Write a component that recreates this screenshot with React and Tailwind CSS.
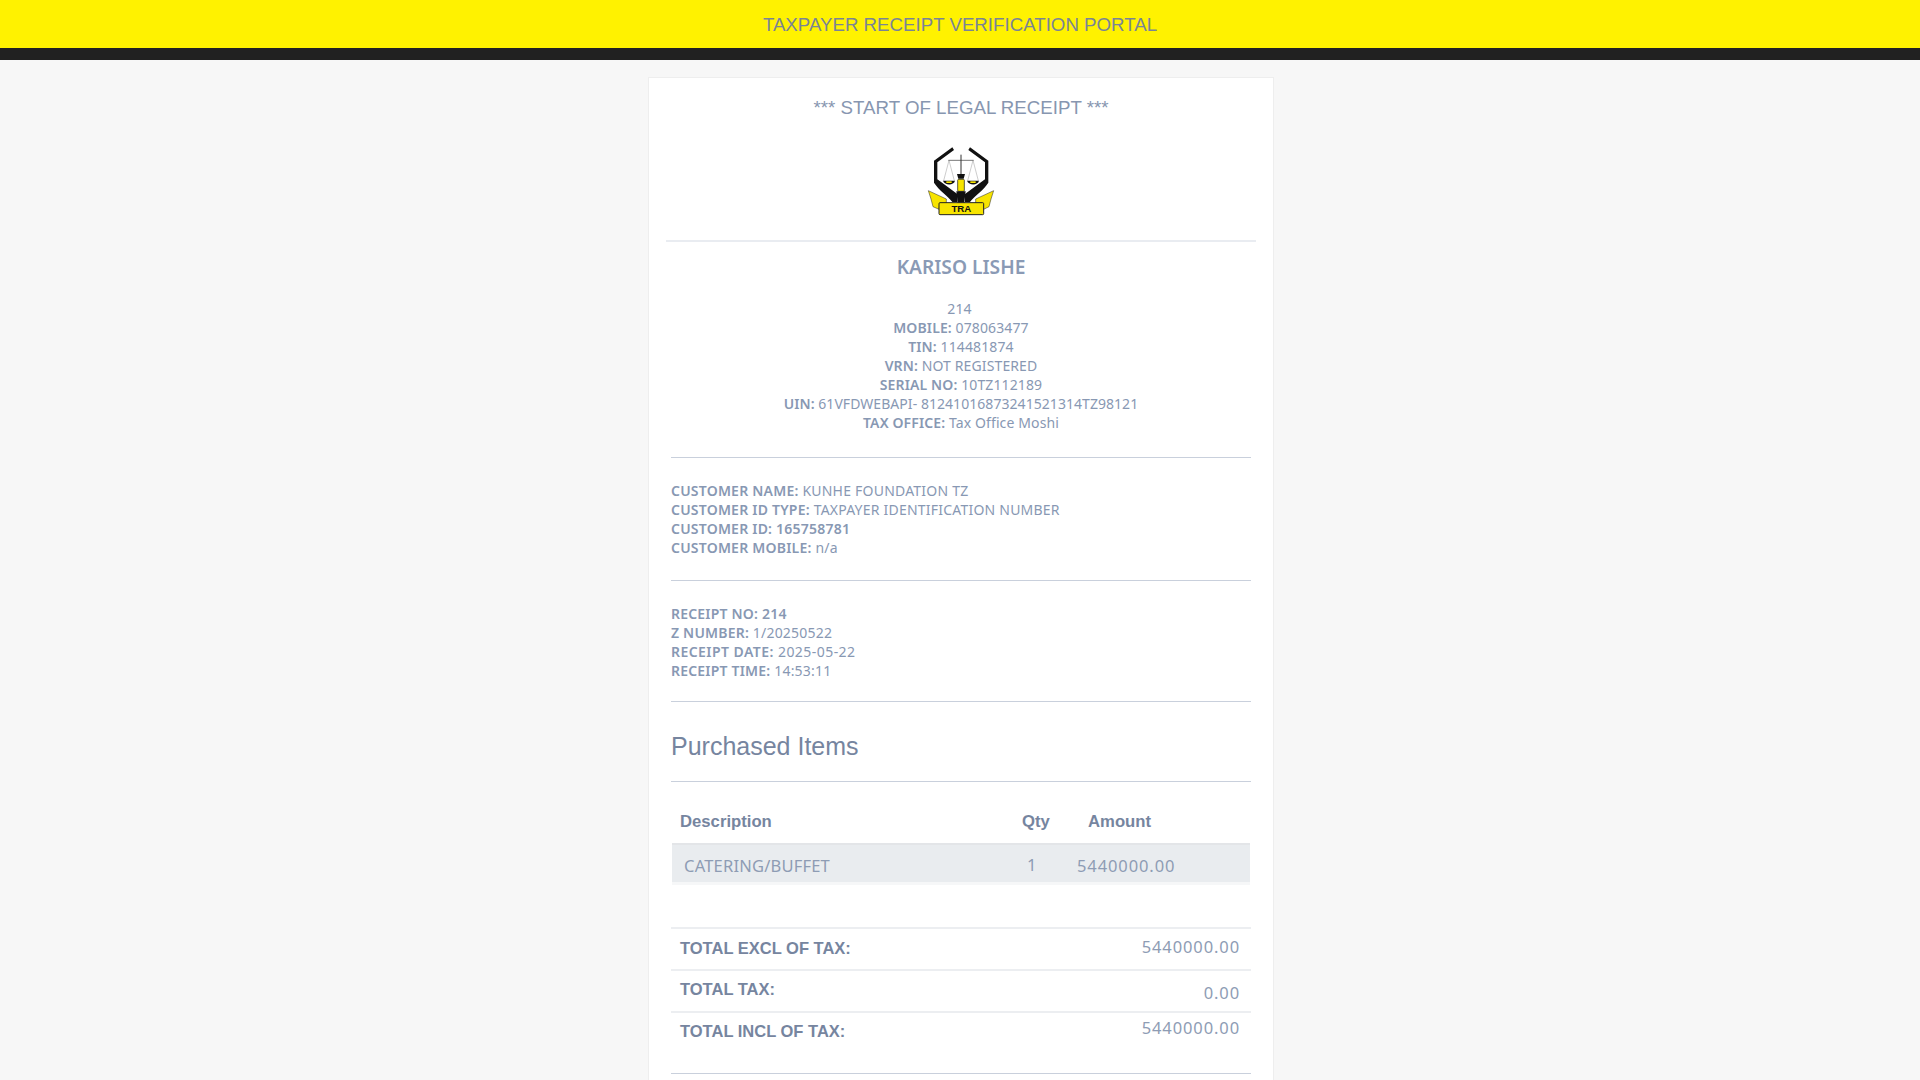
import React from "react";

const sans = "font-['Liberation_Sans',Arial,sans-serif]";

const Arm = () => (
    <path d="M186 50 L191 58 L141 95 L141 146 L201 190 L201 214 L186 214 C172 194 146 180 131 156 L131 90 Z" fill="#111" />
);

const TraLogo = () => (
    <svg width="68" height="72" viewBox="110 46 204 216" className="block">
        <Arm />
        <g transform="translate(425 0) scale(-1 1)">
            <Arm />
        </g>
        {/* scale */}
        <path d="M212 72 L212 130" stroke="#333" strokeWidth="3" />
        <path d="M174 89 L250 89" stroke="#333" strokeWidth="2" />
        <path d="M176 89 L160 150 M176 89 L192 150 M248 89 L232 150 M248 89 L264 150" fill="none" stroke="#666" strokeWidth="1" />
        <path d="M158 150 L194 150 C190 165 164 165 158 150 Z" fill="#111" />
        <path d="M230 150 L266 150 C262 165 236 165 230 150 Z" fill="#111" />
        <rect x="168" y="152" width="16" height="5" fill="#f7e400" />
        <rect x="240" y="152" width="16" height="5" fill="#f7e400" />
        {/* figure */}
        <path d="M200 130 L224 130 L220 144 L204 144 Z" fill="#111" />
        <rect x="202" y="146" width="20" height="36" rx="3" fill="#f7e400" stroke="#111" strokeWidth="2" />
        <path d="M198 182 L226 182 L222 216 L202 216 Z" fill="#111" />
        {/* ribbon */}
        <path d="M114 180 L168 205 L168 218 L148 220 L146 236 L128 228 L122 205 Z" fill="#f7e400" stroke="#222" strokeWidth="1.5" />
        <path d="M310 180 L256 205 L256 218 L278 220 L280 236 L296 228 L302 205 Z" fill="#f7e400" stroke="#222" strokeWidth="1.5" />
        <rect x="146" y="216" width="134" height="36" rx="3" fill="#f7e400" stroke="#222" strokeWidth="3" />
        <text x="213" y="244" textAnchor="middle" fontFamily="Liberation Sans, Arial, sans-serif" fontWeight="700" fontSize="29" fill="#111">TRA</text>
    </svg>
);

const Divider = ({ className }) => (
    <hr className={`border-0 border-t border-[#c9d0dc] mx-[5px] ${className}`} />
);

const Line = ({ label, value, strong, className = "" }) => (
    <p className={`whitespace-nowrap ${className}`}>
        <span className="font-semibold">{label}</span>{" "}
        <span className={strong ? "font-semibold" : ""}>{value}</span>
    </p>
);

const TotalRow = ({ label, value, labelClass, valueClass }) => (
    <div className="flex justify-between h-[42px] border-t-2 border-[#eceef1] pl-[9px] pr-[11px]">
        <span className={`${sans} font-bold text-[16.5px] leading-[22px] text-[#76859f] ${labelClass}`}>{label}</span>
        <span className={`text-[16.5px] tracking-[0.9px] text-[#8e9cb4] ${valueClass}`}>{value}</span>
    </div>
);

export default function App() {
    return (
        <div className="h-screen overflow-hidden bg-[#f7f7f7] font-['Noto_Sans',sans-serif] text-[#8898b3] text-[14px] leading-[19px]">
            <header className={`${sans} h-[48px] bg-[#fff200] flex items-center justify-center text-[18.7px] text-[#7a8496]`}>
                TAXPAYER RECEIPT VERIFICATION PORTAL
            </header>
            <div className="h-[12px] bg-[#212121]" />

            <div className="flex justify-center pl-[2px]">
                <main className="w-[626px] mt-[17px] bg-white border border-[#eeeeee] px-[17px] pb-10">
                    <h1 className={`${sans} text-[18.7px] leading-[24px] text-center text-[#8796b0] pt-[18px]`}>
                        *** START OF LEGAL RECEIPT ***
                    </h1>
                    <div className="flex justify-center mt-[26px]">
                        <TraLogo />
                    </div>
                    <hr className="border-0 border-t-2 border-[#e9ecf1] mt-[22px]" />

                    <h2 className="text-center text-[19.2px] leading-[24px] font-semibold text-[#8a9ab5] mt-[13px]">KARISO LISHE</h2>

                    <div className="text-center mt-[20px] tracking-[0.12px]">
                        <p className="pr-[3px]">214</p>
                        <Line label="MOBILE:" value="078063477" />
                        <Line label="TIN:" value="114481874" />
                        <Line label="VRN:" value="NOT REGISTERED" />
                        <Line label="SERIAL NO:" value="10TZ112189" />
                        <Line label="UIN:" value="61VFDWEBAPI- 81241016873241521314TZ98121" className="tracking-[0.05px]" />
                        <Line label="TAX OFFICE:" value="Tax Office Moshi" />
                    </div>

                    <Divider className="mt-[25px]" />

                    <div className="mx-[5px] mt-[23px] tracking-[0.22px]">
                        <Line label="CUSTOMER NAME:" value="KUNHE FOUNDATION TZ" />
                        <Line label="CUSTOMER ID TYPE:" value="TAXPAYER IDENTIFICATION NUMBER" />
                        <Line label="CUSTOMER ID:" value="165758781" strong />
                        <Line label="CUSTOMER MOBILE:" value="n/a" />
                    </div>

                    <Divider className="mt-[23px]" />

                    <div className="mx-[5px] mt-[23px] tracking-[0.2px]">
                        <Line label="RECEIPT NO:" value="214" strong />
                        <Line label="Z NUMBER:" value="1/20250522" />
                        <Line label="RECEIPT DATE:" value="2025-05-22" className="tracking-[0.45px]" />
                        <Line label="RECEIPT TIME:" value="14:53:11" />
                    </div>

                    <Divider className="mt-[21px]" />

                    <h3 className={`${sans} mx-[5px] text-[25px] leading-[30px] text-[#76859f] mt-[29px]`}>Purchased Items</h3>

                    <Divider className="mt-[20px]" />

                    <div className={`${sans} mx-[5px] flex items-center font-bold text-[16.7px] leading-[20px] text-[#76859f] mt-[28px] h-[23px] pl-[9px]`}>
                        <span className="w-[342px]">Description</span>
                        <span className="w-[66px]">Qty</span>
                        <span>Amount</span>
                    </div>

                    <div className="mx-[6px] mt-[10px] border-t-2 border-[#e3e5e8] h-[39px] bg-[#e9ecef] flex text-[16.5px] leading-[22px] text-[#8e9cb4] pl-[12px] pt-[10px] shadow-[0_3px_0_#f6f7f8]">
                        <span className="w-[343px] tracking-[0.2px]">CATERING/BUFFET</span>
                        <span className="w-[50px] -mt-[1px]">1</span>
                        <span className="tracking-[0.9px]">5440000.00</span>
                    </div>

                    <div className="mx-[5px] mt-[45px]">
                        <TotalRow label="TOTAL EXCL OF TAX:" value="5440000.00" labelClass="pt-[8px]" valueClass="pt-[8px]" />
                        <TotalRow label="TOTAL TAX:" value="0.00" labelClass="pt-[7px]" valueClass="pt-[12px]" />
                        <TotalRow label="TOTAL INCL OF TAX:" value="5440000.00" labelClass="pt-[7px]" valueClass="pt-[5px]" />
                    </div>

                    <Divider className="mt-[20px]" />
                </main>
            </div>
        </div>
    );
}
